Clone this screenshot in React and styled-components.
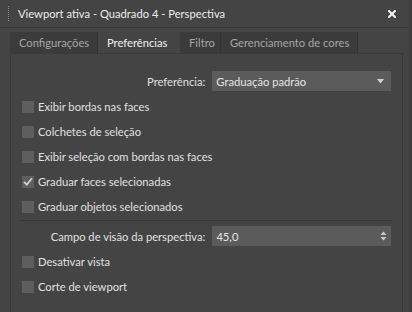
import React from 'react'
import styled, { createGlobalStyle } from 'styled-components'

const GlobalStyle = createGlobalStyle`
  html, body {
    margin: 0;
    padding: 0;
    background: #444444;
  }
  body {
    font-family: Lato, "Noto Sans", sans-serif;
    font-size: 11.2px;
    color: #dcdcdc;
  }
`

const Window = styled.div`
  width: 412px;
  height: 312px;
  box-sizing: border-box;
  background: #444444;
  border-right: 3px solid #3d3d3d;
  display: flex;
  flex-direction: column;
  overflow: hidden;
`

const TitleBar = styled.div`
  height: 28px;
  box-sizing: border-box;
  border-bottom: 1px solid #383838;
  display: flex;
  align-items: center;
  padding-left: 8px;
  padding-right: 13px;
`

const Grip = styled.div`
  width: 1px;
  height: 16px;
  margin-right: 9px;
  background-image: linear-gradient(#8a8a8a 50%, transparent 50%);
  background-size: 1px 2px;
`

const Title = styled.span`
  flex: 1;
  color: #ececec;
  white-space: nowrap;
`

const TabStrip = styled.div`
  display: flex;
  margin: 4px 0 0 10px;
  height: 21px;
`

const Tab = styled.div`
  width: ${p => p.$w}px;
  box-sizing: border-box;
  padding-left: 9px;
  display: flex;
  align-items: center;
  white-space: nowrap;
  background: ${p => (p.$active ? '#444444' : '#3b3b3b')};
  color: ${p => (p.$active ? '#f0f0f0' : '#a6a6a6')};
  border-right: 1px solid ${p => (p.$active ? '#444444' : '#333333')};
`

const Panel = styled.div`
  flex: 1;
  margin: 0 6px 0 10px;
  border: 1px solid #393939;
  border-bottom: none;
  display: flex;
  flex-direction: column;
  padding: 17px 11px 0 11px;
`

const FieldRow = styled.div`
  display: flex;
  align-items: center;
  height: 20px;
`

const FieldLabel = styled.span`
  width: 187px;
  text-align: right;
  padding-right: 7px;
  color: #e0e0e0;
  white-space: nowrap;
`

const Select = styled.div`
  width: 182px;
  height: 20px;
  box-sizing: border-box;
  background: #5b5b5b;
  display: flex;
  align-items: center;
  padding: 0 ${p => p.$padRight || 4}px 0 4px;
  color: #e4e4e4;
  span { flex: 1; }
`

const Check = styled.div`
  display: flex;
  align-items: center;
  height: 25px;
  color: #e0e0e0;
  white-space: nowrap;
`

const Box = styled.span`
  width: 12px;
  height: 12px;
  background: #5e5e5e;
  margin-right: 4px;
  display: flex;
  align-items: center;
  justify-content: center;
`

const Divider = styled.div`
  height: 1px;
  background: #393939;
  margin: 1px 0 5px -2px;
  width: 372px;
`

const CheckList = styled.div`
  display: flex;
  flex-direction: column;
  margin-top: 3px;
`

const CloseIcon = () => (
  <svg width="8" height="8" viewBox="0 0 8 8">
    <path d="M1 1 L7 7 M7 1 L1 7" stroke="#f4f4f4" strokeWidth="2" strokeLinecap="square" />
  </svg>
)

const Arrow = () => (
  <svg width="7" height="5" viewBox="0 0 7 5">
    <path d="M0 0 H7 L3.5 4.5 Z" fill="#d0d0d0" />
  </svg>
)

const Spin = () => (
  <svg width="7" height="10" viewBox="0 0 7 10">
    <path d="M0.5 4 H6.5 L3.5 0.5 Z" fill="#c8c8c8" />
    <path d="M0.5 6 H6.5 L3.5 9.5 Z" fill="#c8c8c8" />
  </svg>
)

const Tick = () => (
  <svg width="10" height="9" viewBox="0 0 10 9">
    <path d="M1 4.8 L3.8 7.6 L9 1.2" stroke="#cfcfcf" strokeWidth="1.8" fill="none" />
  </svg>
)

const CheckItem = ({ label, checked }) => (
  <Check>
    <Box>{checked && <Tick />}</Box>
    {label}
  </Check>
)

const tabs = [
  { label: 'Configurações', w: 88 },
  { label: 'Preferências', w: 82, active: true },
  { label: 'Filtro', w: 41 },
  { label: 'Gerenciamento de cores', w: 137 },
]

export default function App() {
  return (
    <Window>
      <GlobalStyle />
      <TitleBar>
        <Grip />
        <Title>Viewport ativa - Quadrado 4 - Perspectiva</Title>
        <CloseIcon />
      </TitleBar>
      <TabStrip>
        {tabs.map(t => (
          <Tab key={t.label} $w={t.w} $active={t.active}>{t.label}</Tab>
        ))}
      </TabStrip>
      <Panel>
        <FieldRow>
          <FieldLabel>Preferência:</FieldLabel>
          <Select $padRight={7}>
            <span>Graduação padrão</span>
            <Arrow />
          </Select>
        </FieldRow>
        <CheckList>
          <CheckItem label="Exibir bordas nas faces" />
          <CheckItem label="Colchetes de seleção" />
          <CheckItem label="Exibir seleção com bordas nas faces" />
          <CheckItem label="Graduar faces selecionadas" checked />
          <CheckItem label="Graduar objetos selecionados" />
        </CheckList>
        <Divider />
        <FieldRow>
          <FieldLabel>Campo de visão da perspectiva:</FieldLabel>
          <Select>
            <span>45,0</span>
            <Spin />
          </Select>
        </FieldRow>
        <CheckList>
          <CheckItem label="Desativar vista" />
          <CheckItem label="Corte de viewport" />
        </CheckList>
      </Panel>
    </Window>
  )
}
